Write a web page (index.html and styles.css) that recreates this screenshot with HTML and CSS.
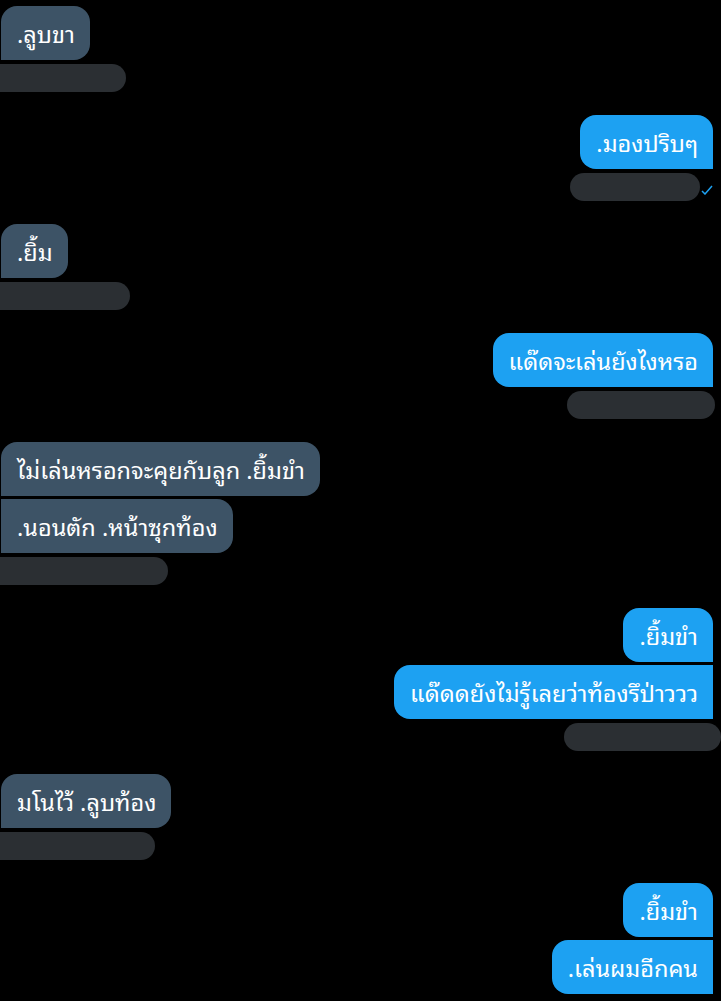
FILE: index.html
```html
<!DOCTYPE html>
<html lang="th">
<head>
    <meta charset="UTF-8">
    <meta name="viewport" content="width=device-width, initial-scale=1.0">
    <title>แชท</title>
    <link rel="stylesheet" href="styles.css">
</head>
<body>

    <div class="chat">

        <div class="group in">
            <div class="bubble">.ลูบขา</div>
            <div class="meta"><span class="redact" style="width: 126px;"></span></div>
        </div>

        <div class="group out">
            <div class="bubble">.มองปริบๆ</div>
            <div class="meta tight">
                <span class="redact" style="width: 130px;"></span>
                <svg class="tick" width="12" height="10" viewBox="0 0 12 10"><polyline points="1,6 4,9 11,1" fill="none" stroke="#1da1f2" stroke-width="1.5"/></svg>
            </div>
        </div>

        <div class="group in">
            <div class="bubble">.ยิ้ม</div>
            <div class="meta"><span class="redact" style="width: 130px;"></span></div>
        </div>

        <div class="group out">
            <div class="bubble">แด๊ดจะเล่นยังไงหรอ</div>
            <div class="meta"><span class="redact" style="width: 148px;"></span></div>
        </div>

        <div class="group in">
            <div class="bubble">ไม่เล่นหรอกจะคุยกับลูก .ยิ้มขำ</div>
            <div class="bubble">.นอนตัก .หน้าซุกท้อง</div>
            <div class="meta"><span class="redact" style="width: 168px;"></span></div>
        </div>

        <div class="group out">
            <div class="bubble">.ยิ้มขำ</div>
            <div class="bubble">แด๊ดดยังไม่รู้เลยว่าท้องรึป่าววว</div>
            <div class="meta wide"><span class="redact" style="width: 157px;"></span></div>
        </div>

        <div class="group in">
            <div class="bubble">มโนไว้ .ลูบท้อง</div>
            <div class="meta"><span class="redact" style="width: 155px;"></span></div>
        </div>

        <div class="group out">
            <div class="bubble">.ยิ้มขำ</div>
            <div class="bubble">.เล่นผมอีกคน</div>
        </div>

    </div>

</body>
</html>
```

FILE: styles.css
```css
body {
    margin: 0;
    padding: 0;
    background-color: #000000;
    font-family: "Noto Sans Thai Looped", "Noto Sans", "Noto Sans Thai", "DejaVu Sans", sans-serif;
    color: #ffffff;
}

.chat {
    display: flex;
    flex-direction: column;
    padding: 6px 8px 0 1px;
}

.group {
    display: flex;
    flex-direction: column;
    gap: 3px;
    margin-bottom: 23px;
}

.group.in {
    align-items: flex-start;
}

.group.out {
    align-items: flex-end;
}

.bubble {
    font-size: 23.5px;
    line-height: 30px;
    padding: 12px 15px 12px 16px;
    border-radius: 16px;
    white-space: nowrap;
}

.in .bubble {
    background-color: #3d5366;
    border-radius: 16px 16px 16px 0;
}

.in .bubble + .bubble {
    border-radius: 0 16px 16px 0;
}

.out .bubble {
    background-color: #1da1f2;
    border-radius: 16px 16px 0 16px;
}

.out .bubble + .bubble {
    border-radius: 16px 0 0 16px;
}

/* ที่ปิดเวลา */
.meta {
    display: flex;
    align-items: center;
    height: 28px;
    margin-top: 1px;
}

.in .meta {
    margin-left: -1px;
}

.out .meta {
    margin-right: -2px;
}

.out .meta.tight {
    margin-right: 0;
}

.out .meta.wide {
    margin-right: -8px;
}

.redact {
    display: block;
    height: 28px;
    background-color: #2b2f33;
    border-radius: 14px;
}

.in .redact {
    border-radius: 0 14px 14px 0;
}

.tick {
    margin-left: 1px;
    margin-top: 6px;
}
```
